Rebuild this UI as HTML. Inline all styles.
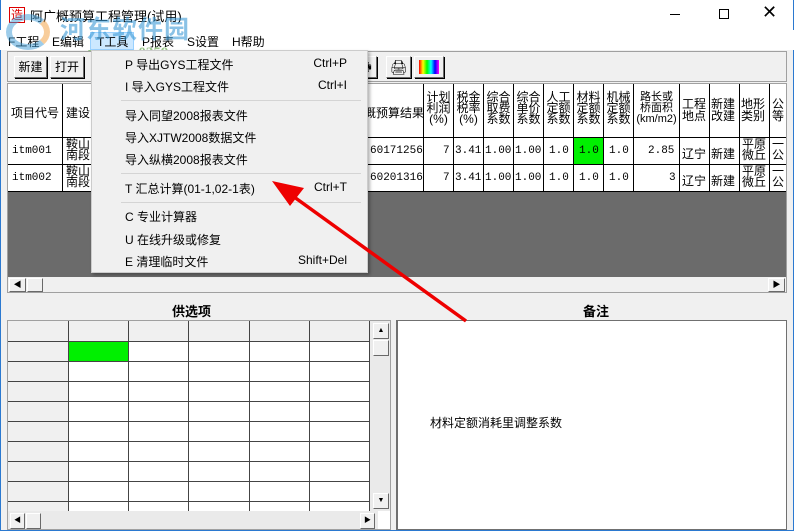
<!DOCTYPE html>
<html><head><meta charset="utf-8"><style>
*{margin:0;padding:0;box-sizing:border-box}
body{width:794px;height:531px;overflow:hidden;background:#f0f0f0;font-family:"Liberation Sans","Noto Sans CJK SC",sans-serif;font-size:12px;color:#000;position:relative}
.a{position:absolute}
.btn{position:absolute;background:#f0f0f0;border:1px solid;border-color:#fff #696969 #696969 #fff;box-shadow:1px 1px 0 #000;text-align:center;line-height:20px;font-size:12px}
.vl{position:absolute;width:1px;background:#000}
.hl{position:absolute;height:1px;background:#000}
.mi{position:absolute;left:125px;font-size:12px}
.sc{position:absolute;right:447px;font-size:12px;text-align:right}
.sep{position:absolute;left:121px;width:240px;height:1px;background:#d4d4d4}
.th{position:absolute;top:92px;font-size:12px;line-height:11px;text-align:center}
.td{position:absolute;font-family:"Liberation Mono",monospace;font-size:11px}
</style></head><body>
<div class="a" style="left:0;top:0;width:794px;height:30px;background:#fff"></div>
<div class="a" style="left:0;top:0;width:1px;height:531px;background:#2b79d0"></div>
<div class="a" style="right:0;top:0;width:1px;height:531px;background:#2b79d0"></div>
<div class="a" style="left:0;bottom:0;width:794px;height:1px;background:#2b79d0"></div>
<div class="a" style="left:9px;top:7px;width:16px;height:16px;border:1px solid #d00;color:#d00;font-size:12px;line-height:14px;text-align:center">造</div>
<div class="a" style="left:30px;top:6px;font-size:13px">阿广概预算工程管理(试用)</div>
<div class="a" style="left:670px;top:14px;width:10px;height:1px;background:#000"></div>
<div class="a" style="left:719px;top:9px;width:10px;height:10px;border:1px solid #000"></div>
<div class="a" style="left:762px;top:2px;font-size:18px">✕</div>
<!-- menu bar -->
<div class="a" style="left:0;top:30px;width:794px;height:20px;background:#fff"></div>
<div class="a" style="left:90px;top:32px;width:44px;height:18px;background:#cce8ff;border:1px solid #99d1ff"></div>
<div class="a" style="left:8px;top:33px;font-size:12px">F工程</div>
<div class="a" style="left:52px;top:33px">E编辑</div>
<div class="a" style="left:97px;top:33px">T工具</div>
<div class="a" style="left:142px;top:33px">P报表</div>
<div class="a" style="left:187px;top:33px">S设置</div>
<div class="a" style="left:232px;top:33px">H帮助</div>
<!-- watermark -->
<div class="a" style="left:6px;top:14px;width:44px;height:36px;border-radius:50%;border:6px solid #3d9bd6;opacity:.5;border-right-color:#f39c3a"></div>
<div class="a" style="left:60px;top:10px;font-size:25px;font-weight:bold;color:#3d9bd6;opacity:.6;letter-spacing:1px">河东软件园</div>
<div class="a" style="left:88px;top:45px;font-size:15px;font-weight:bold;color:#4a9a2a;opacity:.55;font-family:'Liberation Serif',serif">www.pc0359.cn</div>
<!-- toolbar -->
<div class="a" style="left:7px;top:51px;width:780px;height:31px;border:1px solid #a0a0a0;background:#f0f0f0"></div>
<div class="btn" style="left:14px;top:56px;width:33px;height:22px">新建</div>
<div class="btn" style="left:50px;top:56px;width:34px;height:22px">打开</div>
<div class="btn" style="left:355px;top:56px;width:22px;height:22px">🖶</div>
<div class="btn" style="left:386px;top:56px;width:25px;height:22px;font-size:14px">🖨</div>
<div class="btn" style="left:414px;top:56px;width:30px;height:22px"><div style="margin:3px 4px;height:14px;background:linear-gradient(to right,#f00,#ff0,#0f0,#0ff,#00f,#f0f)"></div></div>
<!-- main grid -->
<div class="a" style="left:7px;top:83px;width:780px;height:210px;border:1px solid #a0a0a0;background:#6b6b6b"></div>
<div class="a" style="left:8px;top:84px;width:778px;height:107px;background:#fff"></div>
<div class="a" style="left:8px;top:191px;width:778px;height:86px;background:#6b6b6b"></div>
<div class="a" style="left:8px;top:277px;width:778px;height:15px;background:#f0f0f0"></div>
<div class="btn" style="left:9px;top:278px;width:17px;height:14px;box-shadow:none;font-size:8px;line-height:12px">◀</div>
<div class="btn" style="left:27px;top:278px;width:16px;height:14px;box-shadow:none"></div>
<div class="btn" style="left:768px;top:278px;width:17px;height:14px;box-shadow:none;font-size:8px;line-height:12px">▶</div>
<div class="hl" style="left:8px;top:137px;width:778px"></div>
<div class="hl" style="left:8px;top:164px;width:778px"></div>
<div class="hl" style="left:8px;top:191px;width:778px"></div>
<div class="vl" style="left:62px;top:84px;height:107px"></div>
<div class="vl" style="left:423px;top:84px;height:107px"></div>
<div class="vl" style="left:453px;top:84px;height:107px"></div>
<div class="vl" style="left:483px;top:84px;height:107px"></div>
<div class="vl" style="left:513px;top:84px;height:107px"></div>
<div class="vl" style="left:543px;top:84px;height:107px"></div>
<div class="vl" style="left:573px;top:84px;height:107px"></div>
<div class="vl" style="left:603px;top:84px;height:107px"></div>
<div class="vl" style="left:633px;top:84px;height:107px"></div>
<div class="vl" style="left:679px;top:84px;height:107px"></div>
<div class="vl" style="left:709px;top:84px;height:107px"></div>
<div class="vl" style="left:739px;top:84px;height:107px"></div>
<div class="vl" style="left:769px;top:84px;height:107px"></div>
<div class="a" style="left:574px;top:138px;width:29px;height:26px;background:#00f000"></div>
<div class="a" style="left:11px;top:104px">项目代号</div>
<div class="a" style="left:66px;top:104px">建设</div>
<div class="a" style="left:364px;top:104px">概预算结果</div>
<div class="th" style="left:424px;width:29px">计划<br>利润<br>(%)</div>
<div class="th" style="left:454px;width:29px">税金<br>税率<br>(%)</div>
<div class="th" style="left:484px;width:29px">综合<br>取费<br>系数</div>
<div class="th" style="left:514px;width:29px">综合<br>单价<br>系数</div>
<div class="th" style="left:544px;width:29px">人工<br>定额<br>系数</div>
<div class="th" style="left:574px;width:29px">材料<br>定额<br>系数</div>
<div class="th" style="left:604px;width:29px">机械<br>定额<br>系数</div>
<div class="th" style="left:634px;width:45px;font-size:11px">路长或<br>桥面积<br>(km/m2)</div>
<div class="a" style="left:682px;top:98px;line-height:12px">工程<br>地点</div>
<div class="a" style="left:711px;top:98px;line-height:12px">新建<br>改建</div>
<div class="a" style="left:741px;top:98px;line-height:12px">地形<br>类别</div>
<div class="a" style="left:772px;top:98px;line-height:12px">公<br>等</div>
<div class="td" style="left:12px;top:145px">itm001</div>
<div class="td" style="left:12px;top:172px">itm002</div>
<div class="a" style="left:66px;top:139px;line-height:11px">鞍山<br>南段</div>
<div class="a" style="left:66px;top:166px;line-height:11px">鞍山<br>南段</div>
<div class="td" style="left:370px;top:145px">60171256</div>
<div class="td" style="left:370px;top:172px">60201316</div>
<div class="td" style="left:443px;top:145px">7</div><div class="td" style="left:443px;top:172px">7</div>
<div class="td" style="left:455px;top:145px">3.41</div><div class="td" style="left:455px;top:172px">3.41</div>
<div class="td" style="left:485px;top:145px">1.00</div><div class="td" style="left:485px;top:172px">1.00</div>
<div class="td" style="left:515px;top:145px">1.00</div><div class="td" style="left:515px;top:172px">1.00</div>
<div class="td" style="left:549px;top:145px">1.0</div><div class="td" style="left:549px;top:172px">1.0</div>
<div class="td" style="left:579px;top:145px">1.0</div><div class="td" style="left:579px;top:172px">1.0</div>
<div class="td" style="left:609px;top:145px">1.0</div><div class="td" style="left:609px;top:172px">1.0</div>
<div class="td" style="left:648px;top:145px">2.85</div><div class="td" style="left:669px;top:172px">3</div>
<div class="a" style="left:682px;top:145px">辽宁</div><div class="a" style="left:682px;top:172px">辽宁</div>
<div class="a" style="left:711px;top:145px">新建</div><div class="a" style="left:711px;top:172px">新建</div>
<div class="a" style="left:742px;top:139px;line-height:11px">平原<br>微丘</div><div class="a" style="left:742px;top:166px;line-height:11px">平原<br>微丘</div>
<div class="a" style="left:772px;top:139px;line-height:11px">一<br>公</div><div class="a" style="left:772px;top:166px;line-height:11px">一<br>公</div>
<!-- bottom -->
<div class="a" style="left:172px;top:301px;font-size:13px;font-weight:bold">供选项</div>
<div class="a" style="left:583px;top:301px;font-size:13px;font-weight:bold">备注</div>
<div class="a" style="left:7px;top:320px;width:384px;height:210px;border:1px solid #a0a0a0;background:#fff;overflow:hidden">
<div class="a" style="left:0;top:0;width:60px;height:210px;background:#f0f0f0"></div>
<div class="a" style="left:0;top:0;width:370px;height:20px;background:#f0f0f0"></div>
<div class="a" style="left:61px;top:21px;width:59px;height:19px;background:#00f000"></div>
<div class="vl" style="left:60px;top:0;height:210px;background:#444"></div>
<div class="vl" style="left:120px;top:0;height:210px;background:#444"></div>
<div class="vl" style="left:180px;top:0;height:210px;background:#444"></div>
<div class="vl" style="left:241px;top:0;height:210px;background:#444"></div>
<div class="vl" style="left:301px;top:0;height:210px;background:#444"></div>
<div class="vl" style="left:361px;top:0;height:210px;background:#444"></div>
<div class="hl" style="left:0;top:20px;width:370px;background:#444"></div>
<div class="hl" style="left:0;top:40px;width:370px;background:#444"></div>
<div class="hl" style="left:0;top:60px;width:370px;background:#444"></div>
<div class="hl" style="left:0;top:80px;width:370px;background:#444"></div>
<div class="hl" style="left:0;top:100px;width:370px;background:#444"></div>
<div class="hl" style="left:0;top:120px;width:370px;background:#444"></div>
<div class="hl" style="left:0;top:140px;width:370px;background:#444"></div>
<div class="hl" style="left:0;top:160px;width:370px;background:#444"></div>
<div class="hl" style="left:0;top:180px;width:370px;background:#444"></div>
<div class="a" style="left:362px;top:0;width:20px;height:190px;background:#eaeaea"></div>
<div class="btn" style="left:365px;top:2px;width:16px;height:16px;box-shadow:none;font-size:7px;line-height:14px">▲</div>
<div class="btn" style="left:365px;top:19px;width:16px;height:16px;box-shadow:none"></div>
<div class="btn" style="left:365px;top:172px;width:16px;height:16px;box-shadow:none;font-size:7px;line-height:14px">▼</div>
<div class="a" style="left:0;top:190px;width:370px;height:20px;background:#eaeaea"></div>
<div class="btn" style="left:2px;top:192px;width:15px;height:16px;box-shadow:none;font-size:7px;line-height:14px">◀</div>
<div class="btn" style="left:18px;top:192px;width:15px;height:16px;box-shadow:none"></div>
<div class="btn" style="left:352px;top:192px;width:15px;height:16px;box-shadow:none;font-size:7px;line-height:14px">▶</div>
</div>
<div class="a" style="left:396px;top:320px;width:391px;height:210px;border:1px solid #707070;border-left:2px solid #707070;background:#fff"></div>
<div class="a" style="left:430px;top:414px;font-size:12px">材料定额消耗里调整系数</div>
<!-- dropdown menu -->
<div class="a" style="left:91px;top:50px;width:277px;height:223px;background:#f0f0f0;border:1px solid #ccc;box-shadow:2px 2px 3px rgba(0,0,0,.3)"></div>
<div class="mi" style="top:56px">P 导出GYS工程文件</div><div class="sc" style="top:56px">Ctrl+P</div>
<div class="mi" style="top:78px">I 导入GYS工程文件</div><div class="sc" style="top:78px">Ctrl+I</div>
<div class="sep" style="top:100px"></div>
<div class="mi" style="top:107px">导入同望2008报表文件</div>
<div class="mi" style="top:129px">导入XJTW2008数据文件</div>
<div class="mi" style="top:151px">导入纵横2008报表文件</div>
<div class="sep" style="top:173px"></div>
<div class="mi" style="top:180px">T 汇总计算(01-1,02-1表)</div><div class="sc" style="top:180px">Ctrl+T</div>
<div class="sep" style="top:202px"></div>
<div class="mi" style="top:208px">C 专业计算器</div>
<div class="mi" style="top:231px">U 在线升级或修复</div>
<div class="mi" style="top:253px">E 清理临时文件</div><div class="sc" style="top:253px">Shift+Del</div>
<!-- arrow -->
<svg class="a" style="left:0;top:0" width="794" height="531"><line x1="466" y1="321" x2="290" y2="194" stroke="#e00" stroke-width="3.5"/><polygon points="272,181 304,188 290,206" fill="#e00"/></svg>
</body></html>
